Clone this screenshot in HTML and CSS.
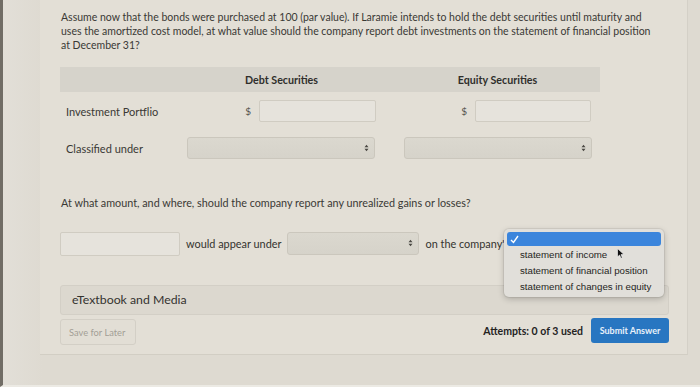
FILE: index.html
```html
<!DOCTYPE html>
<html>
  <head>
    <title>Question</title>
    <link rel="stylesheet" href="styles.css">
  </head>
  <body>
    <div class="screen">
      <div class="card">
        <p class="question">Assume now that the bonds were purchased at 100 (par value). If Laramie intends to hold the debt securities until maturity and uses the amortized cost model, at what value should the company report debt investments on the statement of financial position at December 31?</p>

        <div class="tbl">
          <div class="tr head">
            <span class="c-label"></span>
            <span class="c-debt">Debt Securities</span>
            <span class="c-gap"></span>
            <span class="c-eq">Equity Securities</span>
            <span class="c-end"></span>
          </div>
          <div class="tr row1">
            <span class="c-label">Investment Portflio</span>
            <span class="c-debt money"><span class="dollar">$</span><span class="input debt-in"></span></span>
            <span class="c-gap"></span>
            <span class="c-eq money"><span class="dollar">$</span><span class="input eq-in"></span></span>
          </div>
          <div class="tr row2">
            <span class="c-label">Classified under</span>
            <span class="c-debt"><span class="select wide"><svg class="arrows" width="5" height="8" viewBox="0 0 5 8"><path d="M0.5 3.2 L2.5 0.8 L4.5 3.2 Z M0.5 4.8 L2.5 7.2 L4.5 4.8 Z" fill="#4a4843"/></svg></span></span>
            <span class="c-gap"></span>
            <span class="c-eq"><span class="select wide"><svg class="arrows" width="5" height="8" viewBox="0 0 5 8"><path d="M0.5 3.2 L2.5 0.8 L4.5 3.2 Z M0.5 4.8 L2.5 7.2 L4.5 4.8 Z" fill="#4a4843"/></svg></span></span>
          </div>
        </div>

        <p class="question second">At what amount, and where, should the company report any unrealized gains or losses?</p>

        <div class="answer">
          <span class="input amount"></span>
          <span class="txt">would appear under</span>
          <span class="select mid"><svg class="arrows" width="5" height="8" viewBox="0 0 5 8"><path d="M0.5 3.2 L2.5 0.8 L4.5 3.2 Z M0.5 4.8 L2.5 7.2 L4.5 4.8 Z" fill="#4a4843"/></svg></span>
          <span class="txt">on the company's</span>

          <div class="menu">
            <div class="opt picked">
              <svg width="9" height="9" viewBox="0 0 9 9"><path d="M1 5 L3.5 7.5 L8 1" fill="none" stroke="#fff" stroke-width="1.4"/></svg>
            </div>
            <div class="opt">statement of income</div>
            <div class="opt">statement of financial position</div>
            <div class="opt">statement of changes in equity</div>
            <svg class="cursor" width="8" height="11" viewBox="0 0 8 11"><path d="M0.5 0.5 L0.5 9 L2.6 7 L4 10.3 L5.3 9.7 L4 6.6 L7 6.6 Z" fill="#111" stroke="#fff" stroke-width="0.6"/></svg>
          </div>
        </div>

        <div class="media">eTextbook and Media</div>

        <div class="footer">
          <button class="save">Save for Later</button>
          <div class="right">
            <span class="attempts">Attempts: 0 of 3 used</span>
            <button class="submit">Submit Answer</button>
          </div>
        </div>
      </div>
    </div>
  </body>
</html>
```

FILE: styles.css
```css
body {
  margin: 0;
  background: #dcd8cf;
  font-family: Lato, "Open Sans", sans-serif;
  color: #3a3935;
}
.screen {
  width: 700px;
  height: 387px;
  border-left: 3px solid #716d66;
  box-sizing: border-box;
  background: linear-gradient(to right, #e2dfd8, #dedad1 40px);
  overflow: hidden;
  border-bottom: 2px solid #eceae4;
}
.card {
  margin-left: 37px;
  width: 648px;
  box-sizing: border-box;
  padding: 10px 18px 9px 20px;
  background: #e3dfd6;
  border-right: 1px solid #d4d0c7;
  border-bottom: 1px solid #d2cec4;
}
.question {
  margin: 0 0 0 1px;
  font-size: 10.5px;
  line-height: 14px;
  width: 600px;
}
.tbl {
  width: 540px;
  margin-top: 15px;
  font-size: 11px;
}
.tr {
  display: flex;
  align-items: center;
}
.head {
  height: 25px;
  background: #d6d3cb;
  font-weight: bold;
  font-size: 10.7px;
  color: #2f2e2b;
}
.c-label {
  width: 121px;
  padding-left: 6px;
}
.c-debt {
  width: 189px;
  text-align: center;
}
.c-gap {
  width: 28px;
}
.c-eq {
  width: 187px;
  text-align: center;
}
.c-end {
  width: 9px;
}
.row1 {
  margin-top: 8px;
}
.row2 {
  margin-top: 15px;
}
.money {
  display: flex;
  justify-content: flex-end;
  align-items: center;
}
.dollar {
  margin-right: 8px;
  font-size: 10px;
  color: #55524c;
}
.input {
  display: inline-block;
  height: 20px;
  background: #e6e3dc;
  border: 1px solid #d0ccc2;
  border-radius: 2px;
}
.debt-in {
  width: 115px;
}
.eq-in {
  width: 114px;
}
.select {
  display: flex;
  align-items: center;
  justify-content: flex-end;
  height: 20px;
  background: linear-gradient(#dbd8cf, #d6d3ca);
  border: 1px solid #cbc7bd;
  border-radius: 3px;
}
.wide {
  width: 186px;
}
.arrows {
  margin-right: 5px;
}
.second {
  margin-top: 37px;
  font-size: 10.8px;
}
.answer {
  position: relative;
  display: flex;
  align-items: center;
  margin-top: 22px;
  height: 24px;
  font-size: 10.9px;
}
.amount {
  width: 118px;
  height: 22px;
}
.txt {
  margin: -2px 6px 0 6px;
  color: #34332f;
  white-space: nowrap;
}
.mid {
  width: 130px;
  height: 21px;
  margin-top: -2px;
}
.menu {
  position: absolute;
  left: 444px;
  top: -3px;
  width: 154px;
  padding: 3px 3px 2px;
  background: #e1dfda;
  border-radius: 5px;
  box-shadow: 0 2px 6px rgba(0, 0, 0, 0.22), 0 0 0 1px rgba(0, 0, 0, 0.06);
  font-family: "Liberation Sans", Arial, sans-serif;
  font-size: 9.7px;
  color: #262522;
  z-index: 2;
}
.opt {
  height: 16px;
  line-height: 16px;
  padding-left: 13px;
}
.picked {
  height: 14px;
  background: #3b85dc;
  border-radius: 3px;
  padding-left: 3px;
  display: flex;
  align-items: center;
  margin-bottom: 1px;
}
.cursor {
  position: absolute;
  left: 113px;
  top: 19px;
}
.media {
  margin-top: 29px;
  height: 28px;
  line-height: 28px;
  padding-left: 11px;
  background: #dcd8cf;
  border: 1px solid #d3cfc6;
  border-radius: 3px;
  font-size: 12.3px;
  color: #34332f;
}
.footer {
  display: flex;
  justify-content: space-between;
  align-items: center;
  margin-top: 4px;
}
.save {
  width: 76px;
  height: 26px;
  background: #e2ded5;
  border: 1px solid #d3cfc6;
  border-radius: 3px;
  color: #a29e95;
  font-family: Lato, sans-serif;
  font-size: 9.3px;
  text-align: left;
  padding-left: 8px;
}
.right {
  display: flex;
  align-items: center;
}
.attempts {
  font-weight: bold;
  font-size: 10.5px;
  color: #24231f;
  margin-right: 8px;
  margin-top: -2px;
}
.submit {
  width: 78px;
  height: 25px;
  margin-top: -4px;
  background: #2876c1;
  border: none;
  border-radius: 3px;
  color: #e9f1fa;
  font-family: Lato, sans-serif;
  font-weight: bold;
  font-size: 9px;
  padding: 0;
}
```
